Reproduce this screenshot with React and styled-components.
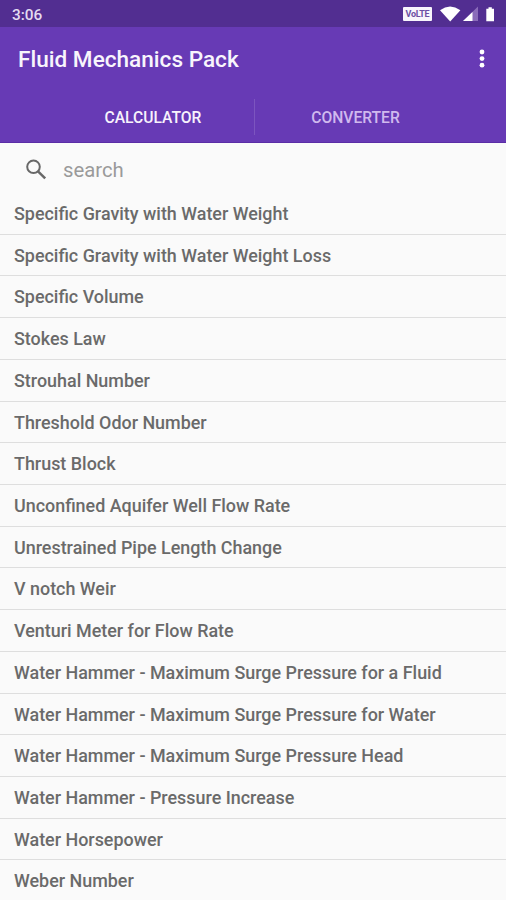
import React from "react";
import styled, { createGlobalStyle } from "styled-components";

const GlobalStyle = createGlobalStyle`
  * { box-sizing: border-box; }
  body { margin: 0; background: #fafafa; font-family: Roboto, sans-serif; overflow: hidden; }
`;

const Screen = styled.main`
  display: flex;
  flex-direction: column;
  width: 506px;
  height: 900px;
  overflow: hidden;
  background: #fafafa;
`;

const StatusBar = styled.div`
  flex: none;
  display: flex;
  align-items: center;
  justify-content: space-between;
  height: 27px;
  padding: 1px 9px 0 12px;
  background: #522e91;
`;

const Clock = styled.span`
  padding-top: 1px;
  font-size: 15.4px;
  font-weight: 500;
  line-height: 18px;
  color: #e4dcf0;
`;

const StatusIcons = styled.div`
  display: flex;
  align-items: center;
`;

const LteBadge = styled.span`
  width: 29px;
  height: 14px;
  margin-right: 8px;
  border-radius: 1px;
  background: #f8f5fc;
  color: #6d4fa4;
  font-size: 9px;
  font-weight: 700;
  line-height: 15px;
  letter-spacing: -0.3px;
  text-align: center;
`;

const Header = styled.header`
  flex: none;
  height: 116px;
  background: #673ab5;
  border-bottom: 1px solid #5a2da6;
`;

const TitleRow = styled.div`
  display: flex;
  align-items: center;
  justify-content: space-between;
  height: 64px;
  padding: 0 21px 0 18px;
`;

const Title = styled.h1`
  margin: 0;
  padding-top: 2px;
  font-size: 22.6px;
  font-weight: 500;
  line-height: 28px;
  color: #f8f5fc;
  white-space: nowrap;
`;

const MenuButton = styled.button`
  display: flex;
  padding: 0;
  border: 0;
  background: none;
`;

const Tabs = styled.nav`
  display: flex;
  height: 51px;
  padding: 0 51px 0 52px;
`;

const Tab = styled.button`
  flex: none;
  width: ${(p) => (p.$active ? "203px" : "201px")};
  height: 36px;
  margin-top: 8px;
  padding: 1px 0 0;
  border: 0;
  border-right: ${(p) => (p.$active ? "1px solid #7c55bf" : "0")};
  background: none;
  font: 500 15.65px/35px Roboto, sans-serif;
  color: ${(p) => (p.$active ? "#f7f2fc" : "#d0b9ee")};
`;

const SearchBar = styled.label`
  flex: none;
  display: flex;
  align-items: center;
  height: 53px;
  padding-left: 25px;
`;

const SearchHint = styled.span`
  margin-left: 16px;
  font-size: 20.3px;
  line-height: 26px;
  color: #9a9a9a;
  padding-top: 1px;
`;

const List = styled.ul`
  flex: none;
  margin: 0;
  padding: 0;
  list-style: none;
`;

const Item = styled.li`
  height: 41.72px;
  margin-top: ${(p) => (p.$first ? "-3.1px" : "0")};
  padding-left: 14px;
  border-bottom: 1px solid #dedede;
  font-size: 17.92px;
  font-weight: 500;
  line-height: 42.4px;
  color: #6a6a6a;
  white-space: nowrap;
`;

const calculators = [
  "Specific Gravity with Water Weight",
  "Specific Gravity with Water Weight Loss",
  "Specific Volume",
  "Stokes Law",
  "Strouhal Number",
  "Threshold Odor Number",
  "Thrust Block",
  "Unconfined Aquifer Well Flow Rate",
  "Unrestrained Pipe Length Change",
  "V notch Weir",
  "Venturi Meter for Flow Rate",
  "Water Hammer - Maximum Surge Pressure for a Fluid",
  "Water Hammer - Maximum Surge Pressure for Water",
  "Water Hammer - Maximum Surge Pressure Head",
  "Water Hammer - Pressure Increase",
  "Water Horsepower",
  "Weber Number",
];

const StatusGlyphs = () => (
  <svg width="57" height="16" viewBox="0 0 57 16" fill="#fff">
    <path d="M0 4.2Q10 -3 20.4 4.2L10.2 15.5Z" />
    <path d="M38 0.5V15H23Z" fill="#8a6bb9" />
    <path d="M32.5 6V15H23Z" />
    <path d="M48.5 1.3h3.3v1.4h2.2v12.6h-7.7V2.7h2.2z" />
  </svg>
);

const MoreIcon = () => (
  <svg width="6" height="20" viewBox="0 0 6 20" fill="#fff">
    <circle cx="3" cy="3" r="2.4" />
    <circle cx="3" cy="9.6" r="2.4" />
    <circle cx="3" cy="16.2" r="2.4" />
  </svg>
);

const SearchIcon = () => (
  <svg width="22" height="22" viewBox="0 0 22 22" fill="none" stroke="#686868" strokeWidth="2">
    <circle cx="8.5" cy="7.8" r="6.3" />
    <path d="M13 12.3L20.2 19.4" strokeWidth="2.5" />
  </svg>
);

export default function App() {
  return (
    <>
      <GlobalStyle />
      <Screen>
        <StatusBar>
          <Clock>3:06</Clock>
          <StatusIcons>
            <LteBadge>VoLTE</LteBadge>
            <StatusGlyphs />
          </StatusIcons>
        </StatusBar>
        <Header>
          <TitleRow>
            <Title>Fluid Mechanics Pack</Title>
            <MenuButton aria-label="More options">
              <MoreIcon />
            </MenuButton>
          </TitleRow>
          <Tabs>
            <Tab $active>CALCULATOR</Tab>
            <Tab>CONVERTER</Tab>
          </Tabs>
        </Header>
        <SearchBar>
          <SearchIcon />
          <SearchHint>search</SearchHint>
        </SearchBar>
        <List>
          {calculators.map((name, i) => (
            <Item key={name} $first={i === 0}>
              {name}
            </Item>
          ))}
        </List>
      </Screen>
    </>
  );
}
